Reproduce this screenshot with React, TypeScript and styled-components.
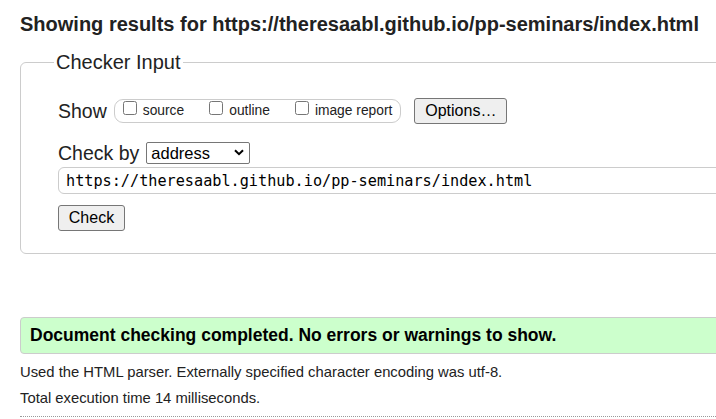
import React from "react";
import styled, { createGlobalStyle } from "styled-components";

const Global = createGlobalStyle`
  html, body { margin: 0; padding: 0; background: #fff; overflow: hidden; }
  body { font-family: "Liberation Sans", Arial, sans-serif; color: #222; }
`;

const Page = styled.div`
  width: 760px;
  padding: 0 0 0 20px;
  box-sizing: border-box;
`;

const Title = styled.h2`
  margin: 0;
  padding-top: 12px;
  font-size: 20px;
  line-height: 24px;
  font-weight: bold;
  color: #222;
  white-space: nowrap;
`;

const Fieldset = styled.fieldset`
  margin: 15px 0 0 0;
  padding: 0 0 22px 37px;
  border: 1px solid #ccc;
  border-radius: 6px;
  min-width: 0;
`;

const Legend = styled.legend`
  margin-left: -4px;
  padding: 0 2px;
  font-size: 20px;
  line-height: 23px;
  color: #222;
`;

const ShowRow = styled.div`
  display: flex;
  align-items: center;
  height: 26px;
  margin-top: 24px;
`;

const Label = styled.span`
  font-size: 19.5px;
  color: #222;
`;

const Group = styled.div`
  display: flex;
  align-items: baseline;
  gap: 25px;
  margin-left: 7px;
  height: 22px;
  padding: 0 8px;
  border: 1px solid #ccc;
  border-radius: 9px;
  font-size: 13.8px;
  line-height: 22px;
`;

const Option = styled.label`
  display: inline-flex;
  align-items: baseline;
  gap: 6px;
  color: #222;
`;

const Box = styled.input`
  margin: 0;
  width: 14px;
  height: 14px;
`;

const Button = styled.button<{ $w: number }>`
  box-sizing: border-box;
  width: ${(p) => p.$w}px;
  height: 26px;
  padding: 0;
  font-family: "Liberation Sans", Arial, sans-serif;
  font-size: 16px;
  color: #000;
  background: #efefef;
  border: 1px solid #767676;
  border-radius: 3px;
`;

const OptionsButton = styled(Button)`
  margin-left: 13px;
`;

const CheckByRow = styled.div`
  display: flex;
  align-items: center;
  gap: 7px;
  margin-top: 18px;
  height: 22px;
`;

const SelectWrap = styled.div`
  position: relative;
  width: 104px;
  height: 22px;
`;

const Select = styled.select`
  appearance: none;
  box-sizing: border-box;
  width: 104px;
  height: 22px;
  margin: 0;
  padding: 0 0 0 4px;
  font-family: "Liberation Sans", Arial, sans-serif;
  font-size: 16.5px;
  color: #000;
  background: #fff;
  border: 1px solid #767676;
  border-radius: 2px;
`;

const Chevron = styled.svg`
  position: absolute;
  right: 6px;
  top: 7px;
  pointer-events: none;
`;

const UrlInput = styled.input`
  box-sizing: border-box;
  display: block;
  width: 700px;
  height: 27px;
  margin: 3px 0 0 0;
  padding: 0 0 0 7px;
  font-family: "DejaVu Sans Mono", "Liberation Mono", monospace;
  font-size: 15.2px;
  color: #000;
  border: 1px solid #ccc;
  border-radius: 6px;
  outline: none;
`;

const CheckButton = styled(Button)`
  display: block;
  margin-top: 11px;
`;

const Success = styled.div`
  box-sizing: border-box;
  margin-top: 63px;
  width: 720px;
  height: 37px;
  padding-left: 9px;
  display: flex;
  align-items: center;
  background: #ccffcc;
  border: 1px solid #ccc;
  border-radius: 4px;
  font-size: 17.5px;
  font-weight: bold;
  color: #000;
  white-space: nowrap;
`;

const Note = styled.p<{ $top: number }>`
  margin: ${(p) => p.$top}px 0 0 0;
  font-size: 14.8px;
  line-height: 17px;
  color: #222;
  white-space: nowrap;
`;

const Rule = styled.hr`
  margin: 9px 0 0 0;
  width: 720px;
  border: none;
  border-top: 1px dotted #999;
`;

export default function App() {
  return (
    <Page>
      <Global />
      <Title>Showing results for https://theresaabl.github.io/pp-seminars/index.html</Title>
      <Fieldset>
        <Legend>Checker Input</Legend>
        <ShowRow>
          <Label>Show</Label>
          <Group>
            <Option>
              <Box type="checkbox" />
              source
            </Option>
            <Option>
              <Box type="checkbox" />
              outline
            </Option>
            <Option>
              <Box type="checkbox" />
              image report
            </Option>
          </Group>
          <OptionsButton $w={93}>Options…</OptionsButton>
        </ShowRow>
        <CheckByRow>
          <Label>Check by</Label>
          <SelectWrap>
            <Select defaultValue="address">
              <option value="address">address</option>
            </Select>
            <Chevron width="10" height="7" viewBox="0 0 10 7">
              <path d="M1 1.2 L5 5.2 L9 1.2" fill="none" stroke="#000" strokeWidth="2" />
            </Chevron>
          </SelectWrap>
        </CheckByRow>
        <UrlInput defaultValue="https://theresaabl.github.io/pp-seminars/index.html" />
        <CheckButton $w={67}>Check</CheckButton>
      </Fieldset>
      <Success>Document checking completed. No errors or warnings to show.</Success>
      <Note $top={10}>Used the HTML parser. Externally specified character encoding was utf-8.</Note>
      <Note $top={9}>Total execution time 14 milliseconds.</Note>
      <Rule />
    </Page>
  );
}
